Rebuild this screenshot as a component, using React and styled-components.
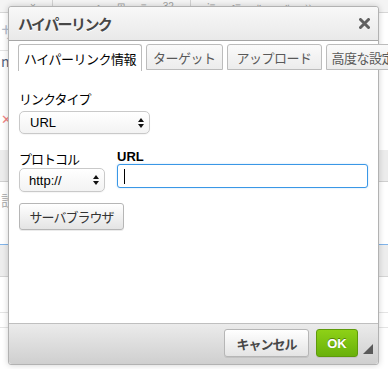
import React from 'react';
import styled, { createGlobalStyle } from 'styled-components';

const GlobalStyle = createGlobalStyle`
    html, body {
        margin: 0;
        padding: 0;
        background: #fff;
    }
    body {
        font-family: "Liberation Sans", "Noto Sans CJK JP", sans-serif;
        font-size: 13px;
        color: #000;
    }
`

const Page = styled.div`
    position: relative;
    width: 388px;
    height: 369px;
    overflow: hidden;
    background: #fff;
`

/* the editor that sits behind the dialog */
const Editor = styled.div`
    display: flex;
    flex-direction: column;
    width: 100%;
    height: 100%;
`

const Toolbar = styled.div`
    height: 12px;
    flex-shrink: 0;
    display: flex;
    align-items: flex-end;
    gap: 16px;
    padding-left: 30px;
    background: #f4f4f4;
    border-bottom: 1px solid #d6d6d6;
    color: #a0a0a0;
    font-size: 10px;
    line-height: 10px;
    overflow: hidden;
`

const ToolSep = styled.span`
    width: 1px;
    height: 12px;
    background: #d2d2d2;
`

const EditorRow = styled.div`
    height: ${p => p.$h}px;
    flex-shrink: 0;
    display: flex;
    align-items: flex-start;
    padding: ${p => p.$pt || 0}px 0 0 1px;
    box-sizing: border-box;
    background: ${p => p.$bg || '#fff'};
    border-bottom: ${p => p.$line ? `1px solid ${p.$line}` : 'none'};
    color: ${p => p.$color || '#999'};
    font-family: "Noto Sans CJK JP", sans-serif;
    font-size: ${p => p.$fs || 14}px;
    line-height: 1;
    overflow: hidden;
`

const Dialog = styled.div`
    position: absolute;
    left: 8px;
    top: 6px;
    width: 369px;
    height: 357px;
    display: flex;
    flex-direction: column;
    border: 1px solid #b2b2b2;
    border-radius: 3px;
    background: #fff;
    box-shadow: 0 0 6px rgba(0, 0, 0, 0.18);
`

const TitleBar = styled.div`
    height: 33px;
    display: flex;
    align-items: center;
    justify-content: space-between;
    padding: 0 8px 0 9px;
    border-bottom: 1px solid #a6a6a6;
    border-radius: 3px 3px 0 0;
    background: linear-gradient(#f8f8f8, #e9e9e9);
`

const Title = styled.div`
    font-family: "Noto Sans CJK JP", sans-serif;
    font-size: 15px;
    font-weight: bold;
    color: #474747;
    text-shadow: 0 1px 0 #fff;
    letter-spacing: -1.6px;
`

const Close = styled.div`
    width: 11px;
    height: 11px;
    display: flex;
`

const Tabs = styled.div`
    display: flex;
    gap: 4px;
    padding: 3px 0 0 9px;
    height: 26px;
    white-space: nowrap;
`

const Tab = styled.div`
    display: flex;
    align-items: center;
    padding: 0 ${p => p.$pad || 5}px;
    font-family: "Noto Sans CJK JP", sans-serif;
    font-size: 13px;
    letter-spacing: -0.5px;
    color: ${p => p.$active ? '#000' : '#595959'};
    border: 1px solid #bcbcbc;
    border-bottom: ${p => p.$active ? 'none' : '1px solid #bcbcbc'};
    border-radius: 3px 3px 0 0;
    background: ${p => p.$active ? '#fff' : 'linear-gradient(#fafafa, #ececec)'};
    height: ${p => p.$active ? 26 : 24}px;
    flex-shrink: 0;
`

const Body = styled.div`
    flex: 1;
    display: flex;
    flex-direction: column;
    padding: 21px 10px 0 10px;
`

const Label = styled.div`
    font-family: "Noto Sans CJK JP", sans-serif;
    font-size: 13px;
    line-height: 16px;
    letter-spacing: -1px;
    margin-bottom: ${p => p.$mb || 0}px;
`

const BoldLabel = styled.div`
    font-family: "Liberation Sans", sans-serif;
    font-size: 13px;
    font-weight: bold;
    line-height: 15px;
`

const Select = styled.div`
    box-sizing: border-box;
    width: ${p => p.$w}px;
    height: ${p => p.$h}px;
    display: flex;
    align-items: center;
    justify-content: space-between;
    padding: 0 5px 0 ${p => p.$pl || 10}px;
    border: 1px solid #c9c9c9;
    border-radius: 5px;
    background: linear-gradient(#fff, #f3f3f3);
    box-shadow: 0 1px 1px rgba(0, 0, 0, 0.04);
    font-family: "Liberation Sans", sans-serif;
    font-size: 13px;
    color: #000;
`

const Arrows = styled.svg`
    width: 6px;
    height: 10px;
`

const Field = styled.div`
    box-sizing: border-box;
    height: 24px;
    display: flex;
    align-items: center;
    padding-left: 6px;
    border: 1px solid #3a97e6;
    border-radius: 3px;
    background: #fff;
    box-shadow: 0 0 2px rgba(58, 151, 230, 0.35);
`

const Caret = styled.span`
    width: 1px;
    height: 15px;
    background: #000;
`

const Row = styled.div`
    display: flex;
    gap: 12px;
    margin-top: ${p => p.$mt || 0}px;
`

const Col = styled.div`
    display: flex;
    flex-direction: column;
    flex: ${p => p.$grow ? 1 : 'none'};
    padding-top: ${p => p.$pt || 0}px;
`

const Button = styled.div`
    box-sizing: border-box;
    width: ${p => p.$w}px;
    height: ${p => p.$h || 28}px;
    display: flex;
    align-items: center;
    justify-content: center;
    font-family: "Noto Sans CJK JP", sans-serif;
    font-size: 13px;
    letter-spacing: -1px;
    font-weight: ${p => p.$bold ? 'bold' : 'normal'};
    color: ${p => p.$bold ? '#474747' : '#333'};
    border: 1px solid #b6b6b6;
    border-radius: 3px;
    background: linear-gradient(#fff, #e4e4e4);
    box-shadow: 0 1px 0 rgba(0, 0, 0, 0.08);
    margin-top: ${p => p.$mt || 0}px;
`

const OkButton = styled(Button)`
    font-family: "Liberation Sans", sans-serif;
    letter-spacing: 0;
    color: #fff;
    text-shadow: 0 -1px 0 #55830c;
    border: 1px solid #5e9a0b;
    background: linear-gradient(#8ed117, #69b10b);
`

const Footer = styled.div`
    position: relative;
    height: 41px;
    display: flex;
    align-items: flex-start;
    justify-content: flex-end;
    gap: 7px;
    padding: 5px 20px 0 0;
    box-sizing: border-box;
    border-top: 1px solid #bfbfbf;
    border-radius: 0 0 3px 3px;
    background: linear-gradient(#ebebeb, #cfcfcf);
`

const Grip = styled.svg`
    position: absolute;
    right: 5px;
    bottom: 10px;
    width: 10px;
    height: 10px;
`

function DoubleArrow() {
    return (
        <Arrows viewBox="0 0 6 10">
            <path d="M0 4 L3 0 L6 4 Z" fill="#111" />
            <path d="M0 6 L3 10 L6 6 Z" fill="#111" />
        </Arrows>
    );
}

function App() {
    return (
        <Page>
            <GlobalStyle />
            <Editor>
                <Toolbar>
                    <span>×</span>
                    <ToolSep />
                    <span>▬</span>
                    <span>◕</span>
                    <span>⊞</span>
                    <span>≡</span>
                    <span>32</span>
                    <ToolSep />
                    <span>⁝≡</span>
                    <span>•≡</span>
                    <span>⇤</span>
                    <span>⇥</span>
                    <span>››</span>
                </Toolbar>
                <EditorRow $h={38} $pt={10} $fs={16} $color="#b2bccb" $line="#e2e2e2">サ</EditorRow>
                <EditorRow $h={24} $pt={3} $color="#51637d">nt</EditorRow>
                <EditorRow $h={75} $pt={37} $fs={13} $color="#f08585">✕</EditorRow>
                <EditorRow $h={32} $bg="#ececec" $line="#cfcfcf" />
                <EditorRow $h={63} $pt={10} $fs={15} $color="#b4b4b4" $line="#80b4ea">設</EditorRow>
                <EditorRow $h={32} $bg="#ededed" $line="#d4d4d4" />
                <EditorRow $h={36} $line="#e4e4e4" />
                <EditorRow $h={15} $line="#e4e4e4" />
            </Editor>

            <Dialog>
                <TitleBar>
                    <Title>ハイパーリンク</Title>
                    <Close>
                        <svg viewBox="0 0 11 11" width="11" height="11">
                            <path d="M1.5 1.5 L9.5 9.5 M9.5 1.5 L1.5 9.5" stroke="#616161" strokeWidth="3" strokeLinecap="round" />
                        </svg>
                    </Close>
                </TitleBar>

                <Tabs>
                    <Tab $active>ハイパーリンク情報</Tab>
                    <Tab $pad={6}>ターゲット</Tab>
                    <Tab $pad={9}>アップロード</Tab>
                    <Tab>高度な設定</Tab>
                </Tabs>

                <Body>
                    <Label $mb={4}>リンクタイプ</Label>
                    <Select $w={131} $h={23}>
                        <span>URL</span>
                        <DoubleArrow />
                    </Select>

                    <Row $mt={15}>
                        <Col $pt={2}>
                            <Label $mb={1}>プロトコル</Label>
                            <Select $w={86} $h={24} $pl={9}>
                                <span>http://</span>
                                <DoubleArrow />
                            </Select>
                        </Col>
                        <Col $grow>
                            <BoldLabel>URL</BoldLabel>
                            <Field>
                                <Caret />
                            </Field>
                        </Col>
                    </Row>

                    <Button $w={105} $h={27} $mt={11}>サーバブラウザ</Button>
                </Body>

                <Footer>
                    <Button $w={85} $bold>キャンセル</Button>
                    <OkButton $w={42} $bold>OK</OkButton>
                    <Grip viewBox="0 0 10 10">
                        <path d="M10 0 L10 10 L0 10 Z" fill="#5a5a5a" />
                    </Grip>
                </Footer>
            </Dialog>
        </Page>
    );
}

export default App;
